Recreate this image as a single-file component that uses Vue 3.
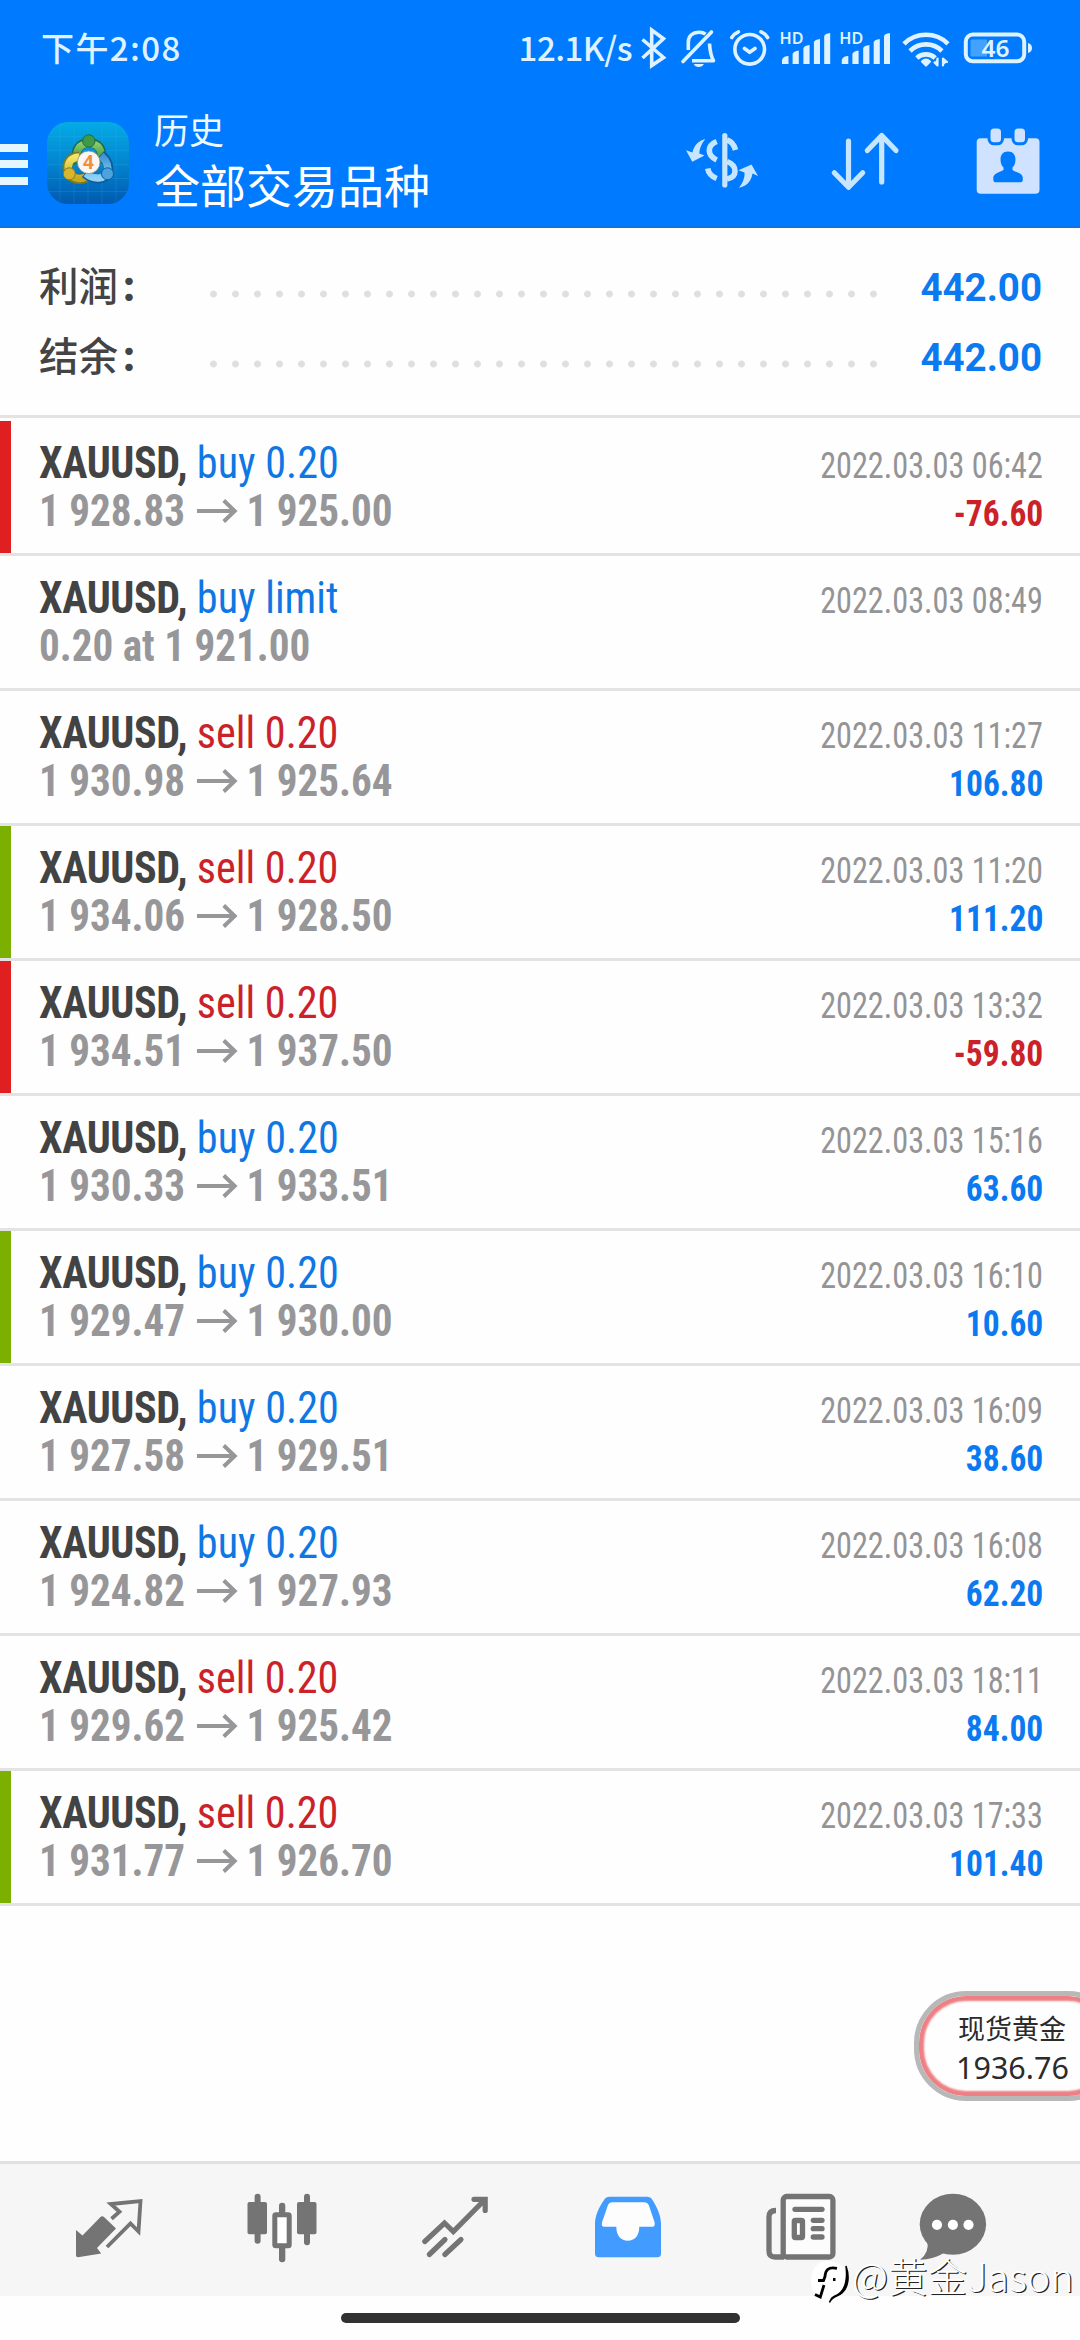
<script setup>
const summary = [
  { label: '利润', value: '442.00' },
  { label: '结余', value: '442.00' },
]

const deals = [
  { side: 'buy', volume: '0.20', from: '1 928.83', to: '1 925.00', time: '2022.03.03 06:42', profit: '-76.60', mark: 'red' },
  { side: 'buy', volume: 'limit', order: '0.20 at 1 921.00', time: '2022.03.03 08:49' },
  { side: 'sell', volume: '0.20', from: '1 930.98', to: '1 925.64', time: '2022.03.03 11:27', profit: '106.80' },
  { side: 'sell', volume: '0.20', from: '1 934.06', to: '1 928.50', time: '2022.03.03 11:20', profit: '111.20', mark: 'green' },
  { side: 'sell', volume: '0.20', from: '1 934.51', to: '1 937.50', time: '2022.03.03 13:32', profit: '-59.80', mark: 'red' },
  { side: 'buy', volume: '0.20', from: '1 930.33', to: '1 933.51', time: '2022.03.03 15:16', profit: '63.60' },
  { side: 'buy', volume: '0.20', from: '1 929.47', to: '1 930.00', time: '2022.03.03 16:10', profit: '10.60', mark: 'green' },
  { side: 'buy', volume: '0.20', from: '1 927.58', to: '1 929.51', time: '2022.03.03 16:09', profit: '38.60' },
  { side: 'buy', volume: '0.20', from: '1 924.82', to: '1 927.93', time: '2022.03.03 16:08', profit: '62.20' },
  { side: 'sell', volume: '0.20', from: '1 929.62', to: '1 925.42', time: '2022.03.03 18:11', profit: '84.00' },
  { side: 'sell', volume: '0.20', from: '1 931.77', to: '1 926.70', time: '2022.03.03 17:33', profit: '101.40', mark: 'green' },
]
</script>

<template>
  <div class="screen">
    <header class="top">
      <div class="status">
        <span class="clock">下午2:08</span>
        <span class="speed">12.1K/s</span>
        <svg class="status-icons" width="396" height="44" viewBox="638 26 396 44" fill="none" stroke="#dff2ff" stroke-width="3.6" stroke-linecap="round" stroke-linejoin="round">
          <!-- bluetooth -->
          <path d="M642.5 39.5 663.5 57.5 651.7 65.5V30L663.5 38.7 642.5 58" stroke-linejoin="miter" stroke-linecap="butt" />
          <!-- muted bell -->
          <path d="M683 61.5 711.5 32" />
          <path d="M688.3 50V42.5C688.3 35.5 693 32.5 698.7 32.3 701.5 32.2 704 33 705.5 34.2" stroke-linecap="butt" />
          <path d="M692 60.8H713.5C711 56 710 52 709.5 43.5" stroke-linecap="butt" />
          <path d="M693.8 64H703.8C702.5 68 695 68 693.8 64Z" fill="#dff2ff" stroke="none" />
          <!-- alarm -->
          <circle cx="749.7" cy="49.3" r="14.8" />
          <path d="M731.8 37.5C733.3 35 735.6 33 738.4 31.8M761 31.8C763.8 33 766.1 35 767.6 37.5M744.5 48.5 749.7 52.3 755 48.5" />
          <!-- signal strength, two SIMs -->
          <g fill="#dff2ff" stroke="none">
            <path d="M782 64V60Q783 56 788.5 56V64ZM792.6 64V54Q793.5 51 798.8 50.5V64ZM803.4 64V48Q804.3 45.5 809.6 45V64ZM813.9 64V42Q814.8 39.5 820 39V64ZM824.2 64V36Q825 33.5 830.2 33V64Z" />
            <path transform="translate(59.8 0)" d="M782 64V60Q783 56 788.5 56V64ZM792.6 64V54Q793.5 51 798.8 50.5V64ZM803.4 64V48Q804.3 45.5 809.6 45V64ZM813.9 64V42Q814.8 39.5 820 39V64ZM824.2 64V36Q825 33.5 830.2 33V64Z" />
            <text class="hd" x="779.5" y="43.8" textLength="24" lengthAdjust="spacingAndGlyphs">HD</text>
            <text class="hd" x="839.3" y="43.8" textLength="24" lengthAdjust="spacingAndGlyphs">HD</text>
          </g>
          <!-- wifi -->
          <g stroke-width="4.6" stroke-linecap="butt">
            <path d="M904 43.8C916 31.8 936 31.8 948 43.8" />
            <path d="M910 51C919 42.2 933 42.2 942 51" />
            <path d="M916.8 58C922 53.2 930 53.2 935.2 58" />
          </g>
          <path d="M922 61.5Q926 58 930 61.5L926 65.5ZM937.5 58.5V65.5L934.5 62.5M943 65.5V58.5L947 62" fill="#dff2ff" stroke-width="2.2" />
          <!-- battery -->
          <rect x="965.8" y="34.5" width="58.4" height="26.8" rx="7" stroke-width="4" />
          <path d="M972 39.5H987V56.5H972Q970.5 56.5 970.5 55V41Q970.5 39.5 972 39.5Z" fill="#44a2ff" stroke="none" />
          <path d="M1028 43Q1032 44 1032 48T1028 53Z" fill="#dff2ff" stroke="none" />
          <text class="charge" x="981.5" y="56.8" textLength="28" lengthAdjust="spacingAndGlyphs" fill="#dff2ff" stroke="none">46</text>
        </svg>
      </div>

      <div class="bar">
        <div class="burger"><i></i><i></i><i></i></div>
        <svg class="logo" width="82" height="82" viewBox="47 121.5 82 82">
          <defs>
            <linearGradient id="sky" x1="0" y1="0" x2="0" y2="1">
              <stop offset="0" stop-color="#04abe6" />
              <stop offset="0.5" stop-color="#0385cf" />
              <stop offset="1" stop-color="#0159b0" />
            </linearGradient>
            <linearGradient id="leaf" x1="0" y1="0" x2="0" y2="1">
              <stop offset="0" stop-color="#8bc96c" />
              <stop offset="1" stop-color="#2f8b3c" />
            </linearGradient>
            <linearGradient id="gold" x1="0" y1="0" x2="0" y2="1">
              <stop offset="0" stop-color="#f2e66a" />
              <stop offset="1" stop-color="#c9a91c" />
            </linearGradient>
            <linearGradient id="wave" x1="0" y1="0" x2="0" y2="1">
              <stop offset="0" stop-color="#3d93d4" />
              <stop offset="1" stop-color="#8fd2f6" />
            </linearGradient>
          </defs>
          <rect x="47" y="121.5" width="82" height="82" rx="21" fill="url(#sky)" />
          <path d="M60 124V201M74 122V203M88 122V203M102 122V203M116 124V201M49 136H127M47 150H129M47 164H129M47 178H129M49 191H127" stroke="#36b6f0" stroke-opacity=".2" fill="none" />
          <g fill="none">
            <path d="M78 163C73 149 80 142.500 89 142.500S105 149 100 163" stroke="#1d6b45" stroke-width="9.500" />
            <path d="M78 162C74 150 80 143 89 143S104 150 100 162" stroke="url(#leaf)" stroke-width="7.500" />
            <path d="M79 156C69 156 65.500 164 68 171.500S80 180.500 87 177" stroke="#7d7a1d" stroke-width="9.500" />
            <path d="M79 156.500C70 157 66.500 164 69 171S80 179.500 86 176.500" stroke="url(#gold)" stroke-width="7.500" />
            <path d="M101 154C108 160 110 167 107.500 173S94 181 85 173" stroke="#0f5c98" stroke-width="9.500" />
            <path d="M101 155C107.500 161 109 167 107 172.500S94 180 86 173" stroke="url(#wave)" stroke-width="7.500" />
          </g>
          <circle cx="88.800" cy="140.500" r="6.200" fill="#3f9a45" stroke="#1d6b45" />
          <circle cx="69.300" cy="173.300" r="6" fill="#d8b62c" stroke="#8a7a1c" />
          <circle cx="107.500" cy="173.300" r="6" fill="#4ba3df" stroke="#0f5c98" />
          <circle cx="88.700" cy="161.800" r="11.300" fill="#fbf6f2" stroke="#8a8f70" stroke-width=".8" />
          <text class="four" x="88.500" y="168.400" text-anchor="middle" fill="#f0903c">4</text>
        </svg>
        <div class="titles">
          <div class="page">历史</div>
          <div class="scope">全部交易品种</div>
        </div>

        <svg class="currency" width="76" height="60" viewBox="684 130 76 60" fill="none" stroke="#c6e6ff" stroke-width="5.600">
          <path d="M724.800 135.500V185" stroke-width="5.200" stroke-linecap="round" />
          <path d="M716.700 141.500Q709.300 144.500 709.300 150.500T716.700 160M727 140Q733.500 142 735.500 150M707.700 168.500Q709 175.500 716.700 178.500M727 161.500Q735 164.500 735 171T727 179" />
          <path d="M705.300 139C699 140.500 694 145 692.500 152.500L686 150.300 692.300 161.700 704.500 155.500 699.300 153.600C699.300 149 701.500 143.500 705.300 139ZM739 187.700C746.500 186 751 182 752.500 173.500L758 176 751.500 164.500 738.500 170.300 744.500 172.500C745 178 742.500 183.500 739 187.700Z" fill="#c6e6ff" stroke="none" />
        </svg>
        <svg class="sort" width="72" height="62" viewBox="829 131 72 62" fill="none" stroke="#c6e6ff" stroke-width="5.200" stroke-linecap="round" stroke-linejoin="round">
          <path d="M848.500 141V187M834.300 172.800 848.500 187.300 862.700 172.800M881.700 182V136M867.300 150.500 881.700 135.500 896 150.500" />
        </svg>
        <svg class="calendar" width="64" height="68" viewBox="976 127 64 68">
          <rect x="976.700" y="138.300" width="62.800" height="55.400" rx="4" fill="#cfe2ff" />
          <g fill="#cfe2ff" stroke="#007bff" stroke-width="3">
            <rect x="989" y="127" width="13.500" height="16.800" rx="5" />
            <rect x="1013" y="127" width="13.500" height="16.800" rx="5" />
          </g>
          <path d="M1008 151.500C1013 151.500 1015.500 155 1015.500 159.500 1015.500 163.500 1014 166 1012.500 167.500V170C1016 172.500 1022.800 173 1022.800 178V180Q1022.800 182.300 1020.500 182.300H995.500Q993.300 182.300 993.300 180V178C993.300 173 1000 172.500 1003.500 170V167.500C1002 166 1000.500 163.500 1000.500 159.500 1000.500 155 1003 151.500 1008 151.500Z" fill="#007bff" />
        </svg>
      </div>
    </header>

    <section class="summary">
      <div v-for="s in summary" :key="s.label" class="sum-row">
        <span class="sum-label">{{ s.label }}<b>:</b></span>
        <span class="dots"></span>
        <span class="sum-value">{{ s.value }}</span>
      </div>
    </section>

    <main class="deals">
      <article v-for="d in deals" :key="d.time" class="deal" :class="d.mark">
        <div class="line">
          <span class="title"><b class="symbol">XAUUSD,</b> <span :class="d.side">{{ d.side }} {{ d.volume }}</span></span>
          <time>{{ d.time }}</time>
        </div>
        <div class="line">
          <span v-if="d.order" class="price">{{ d.order }}</span>
          <span v-else class="price">{{ d.from }}<svg class="to" width="44" height="24" viewBox="0 0 44 24"><path d="M0 12H40M28.500 1.500 40 12 28.500 22.500" fill="none" stroke="#97979a" stroke-width="4.200" /></svg>{{ d.to }}</span>
          <span v-if="d.profit" class="profit" :class="{ loss: d.profit.startsWith('-') }">{{ d.profit }}</span>
        </div>
      </article>
    </main>

    <nav class="tabs">
      <span class="tab">
        <svg width="70" height="72" viewBox="73.500 2192 70 72"><path d="M75.500 2230 82 2235.500 100 2217Q101.600 2215.500 103.500 2217L115.500 2228.500 96.500 2248 100.700 2253.500 77.500 2257.300Q75.500 2257.300 75.500 2255.500Z" fill="#747474" /><path d="M111 2218.800 119 2211.800 110.300 2204 140 2201 138 2231.500 130 2223.500 106.500 2247" fill="none" stroke="#747474" stroke-width="3.800" /></svg>
      </span>
      <span class="tab">
        <svg width="72" height="72" viewBox="245 2192 72 72" fill="#747474"><rect x="253.600" y="2193.700" width="6" height="50" rx="3" /><rect x="246.500" y="2202" width="19.500" height="32.300" rx="2" /><rect x="278" y="2202.700" width="6.300" height="59.500" rx="3" /><rect x="273.800" y="2214.800" width="14.400" height="31" rx="1" fill="#fff" stroke="#747474" stroke-width="5" /><rect x="303" y="2193.700" width="6" height="51.500" rx="3" /><rect x="296" y="2202" width="19.500" height="32.300" rx="2" /></svg>
      </span>
      <span class="tab">
        <svg width="72" height="72" viewBox="418 2192 72 72" fill="none" stroke="#747474" stroke-width="5.200" stroke-linecap="round"><path d="M423.800 2241.500 443.500 2223 452.300 2231.500 484 2199.500M473 2199.300H484.200V2210.500M428.300 2254.500 444 2239.500M443.900 2254.500 460 2239.500" /></svg>
      </span>
      <span class="tab">
        <svg width="70" height="72" viewBox="592.500 2192 70 72"><path d="M609 2196.700H646.500Q650 2196.700 652 2200C657 2208 660.500 2216 660.500 2224V2253.500Q660.500 2257.300 657 2257.300H598Q594.500 2257.300 594.500 2253.500V2224C594.500 2216 598 2208 603.500 2200Q605.500 2196.700 609 2196.700Z" fill="#429bff" /><path d="M611.500 2202.300H644Q647 2202.300 648.300 2205L654 2222Q655 2226.700 652 2226.700H638.800C638.800 2236 634 2240.700 627.300 2240.700S615.800 2236 615.800 2226.700H603.500Q600.500 2226.700 601.600 2222L607.500 2205Q608.500 2202.300 611.500 2202.300Z" fill="#fdfdfe" /></svg>
      </span>
      <span class="tab">
        <svg width="72" height="72" viewBox="765 2192 72 72" fill="none" stroke="#747474" stroke-width="5.300"><rect x="783.200" y="2196.500" width="49.700" height="60.500" rx="3.500" fill="#fcfcfc" /><path d="M776 2210.500Q769 2210.500 769 2217V2251Q769 2257 775 2257H784" /><path d="M795 2209.300H822M813.300 2220.300H822M813.300 2228.700H822M813.300 2237H822" stroke-linecap="round" /><rect x="794.300" y="2220.500" width="8.200" height="17" rx="1" /></svg>
      </span>
      <span class="tab last">
        <svg width="70" height="72" viewBox="918 2192 70 72"><ellipse cx="952.900" cy="2224.200" rx="33.200" ry="30.500" fill="#747474" /><path d="M927 2240Q930 2252 920 2259.700 933 2259.500 944 2253Z" fill="#747474" /><g fill="#fff"><circle cx="937" cy="2224.800" r="5.100" /><circle cx="952.900" cy="2224.800" r="5.100" /><circle cx="968.500" cy="2224.800" r="5.100" /></g></svg>
      </span>
    </nav>
    <div class="home"><i></i></div>

    <aside class="quote">
      <span class="quote-name">现货黄金</span>
      <span class="quote-price">1936.76</span>
    </aside>

    <div class="sign">
      <svg width="44" height="46" viewBox="808 2259 44 46">
        <path d="M827 2261C840 2261 848 2269 848 2280S840 2300 828 2301C817 2300 811 2291 811 2281S816 2261 827 2261Z" fill="#fff" />
        <path d="M846 2266C850 2277 848 2288 842 2293 838 2296.500 832 2296 829.500 2302.500 831 2299 831 2297.500 834 2296.500 844 2293 848 2282 846 2266Z" fill="#000" stroke="#000" stroke-width="1.500" />
        <path d="M837 2268.300C828 2266.500 825.500 2270 825 2276.500L823.500 2280.500H818M824 2285 820.300 2297 815 2294.500M833 2279.500H835.500" fill="none" stroke="#000" stroke-width="2.800" />
      </svg>
      <span>@黄金Jason</span>
    </div>
  </div>
</template>

<style>
body {
  background: #fff;
}
</style>

<style scoped>
.screen {
  position: relative;
  display: flex;
  flex-direction: column;
  width: 1080px;
  height: 2340px;
  overflow: hidden;
  background: #fefefe;
  font-family: Roboto, "Noto Sans CJK SC", sans-serif;
}
.top {
  box-sizing: border-box;
  height: 228px;
  background: #007bff;
  border-bottom: 2px solid #1271dc;
  color: #fff;
}
.status {
  display: flex;
  align-items: center;
  height: 96px;
  padding: 0 46px 0 41px;
  font: 500 33px/46px "Noto Sans CJK SC", sans-serif;
  color: #dff2ff;
}
.clock,
.speed {
  margin-top: -2px;
}
.clock {
  letter-spacing: 1.400px;
}
.speed {
  margin-left: auto;
  margin-right: 6px;
  letter-spacing: -0.500px;
}
.status-icons {
  display: block;
}
.hd {
  font: 600 16px "Noto Sans", sans-serif;
}
.charge {
  font: 600 22.500px "Noto Sans", sans-serif;
}
.four {
  font: 700 19px "Noto Sans", sans-serif;
}
.bar {
  display: flex;
  align-items: flex-start;
  height: 130px;
  padding-right: 40px;
}
.burger {
  display: flex;
  flex-direction: column;
  gap: 8.500px;
  width: 28px;
  margin-top: 47.500px;
}
.burger i {
  height: 8px;
  background: #e6f6ff;
}
.logo {
  margin: 25.500px 0 0 19px;
}
.titles {
  margin: 7px auto 0 25px;
  font-family: "Noto Sans CJK SC", sans-serif;
}
.page {
  font-size: 35px;
  line-height: 52px;
  color: #edf8ff;
}
.scope {
  font-size: 46px;
  line-height: 56px;
}
.currency {
  margin: 34px 69px 0 0;
}
.sort {
  margin: 35px 75px 0 0;
}
.calendar {
  margin-top: 31px;
}
.summary {
  box-sizing: border-box;
  height: 190px;
  padding: 24px 38px 0 39px;
  border-bottom: 3px solid #e3e3e4;
}
.sum-row {
  display: flex;
  height: 70px;
  line-height: 71px;
}
.sum-label {
  width: 171px;
  margin-top: -4px;
  font-family: "Noto Sans CJK SC", sans-serif;
  font-size: 39.500px;
  font-weight: 500;
  color: #444;
}
.sum-label b {
  font-family: Lato, sans-serif;
  font-size: 46px;
  font-weight: 900;
  line-height: 1;
  margin-left: 5px;
}
.dots {
  width: 682px;
  height: 22px;
  margin-top: 31px;
  background: radial-gradient(circle at 3.500px 11px, #dfdfdf 3px, transparent 3.900px) 0 0 / 22px 22px;
}
.sum-value {
  margin-left: auto;
  font-size: 38.500px;
  font-weight: 700;
  color: #0b7af0;
}
.deals {
  margin-top: 3px;
}
.deal {
  box-sizing: border-box;
  height: 135px;
  padding: 19px 37px 0 39px;
  border-bottom: 3px solid #e3e3e4;
  font-family: "Roboto Condensed", Roboto, sans-serif;
  font-size: 43.500px;
}
.deal.red {
  background: linear-gradient(#e02020, #e02020) 0 0 / 11px 132px no-repeat;
}
.deal.green {
  background: linear-gradient(#7cb000, #7cb000) 0 0 / 11px 132px no-repeat;
}
.line {
  display: flex;
  justify-content: space-between;
  align-items: baseline;
  height: 48px;
  line-height: 48px;
}
.title {
  transform: scaleX(0.969);
  transform-origin: left;
}
.symbol {
  font-weight: 700;
  letter-spacing: -0.400px;
  color: #434343;
}
.buy {
  color: #0f77e3;
}
.sell {
  color: #cb2229;
}
time {
  font-size: 36px;
  color: #949496;
  transform: scaleX(0.895);
  transform-origin: right;
}
.price {
  font-weight: 700;
  color: #97979a;
  transform: scaleX(0.945);
  transform-origin: left;
}
.to {
  margin: 0 9px 3px 12px;
}
.profit {
  font-size: 36px;
  font-weight: 700;
  color: #0b7af0;
  transform: scaleX(0.93);
  transform-origin: right;
}
.profit.loss {
  color: #cb2229;
}
.tabs {
  box-sizing: border-box;
  display: flex;
  height: 135px;
  margin-top: auto;
  padding: 28px 0 0 22px;
  border-top: 3px solid #e1e1e1;
  background: #f6f6f6;
}
.tab {
  width: 173.200px;
}
.tab svg {
  display: block;
  margin: 0 auto;
}
.tab.last {
  width: 130px;
}
.home {
  display: flex;
  justify-content: center;
  height: 44px;
  background: #fefefe;
}
.home i {
  width: 399px;
  height: 10px;
  margin-top: 17px;
  border-radius: 5px;
  background: #313131;
}
.quote {
  position: absolute;
  left: 914px;
  top: 1991px;
  box-sizing: border-box;
  display: flex;
  flex-direction: column;
  width: 206px;
  height: 110px;
  padding: 14px 0 0 39px;
  border: 5px solid #b8b8b8;
  border-radius: 52px;
  background: #fefefe;
  box-shadow: inset 0 0 2px 5px #ee7f84;
  color: #2b2b2b;
}
.quote-name {
  font: 400 27px/36px "Noto Sans CJK SC", sans-serif;
}
.quote-price {
  margin: 3px 0 0 -2px;
  font: 400 30.500px/36px "Noto Sans", sans-serif;
}
.sign {
  position: absolute;
  left: 808px;
  top: 2251px;
  display: flex;
  align-items: flex-start;
  color: #fff;
  font: 300 39.500px/48px "Noto Sans CJK SC", sans-serif;
  text-shadow: 1.200px 1.200px 0 #222;
}
.sign svg {
  margin-top: 8px;
}
</style>
